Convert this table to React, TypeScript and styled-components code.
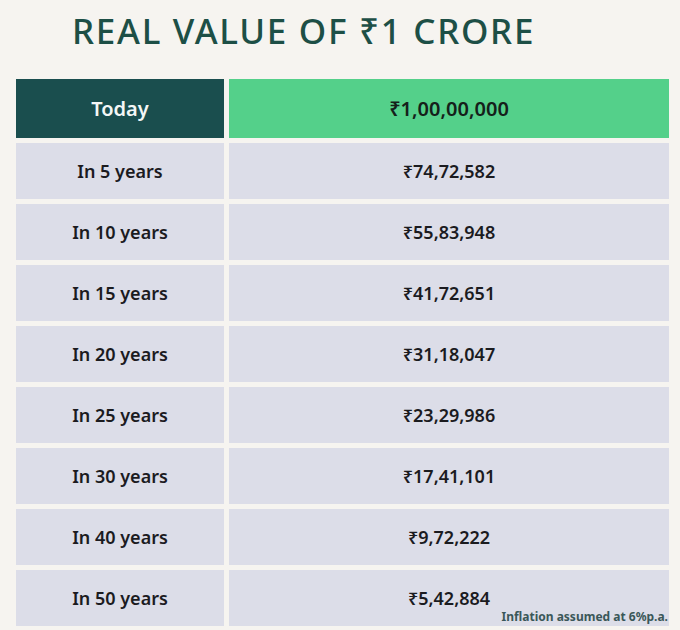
import React from 'react'
import styled, { createGlobalStyle } from 'styled-components'

const GlobalStyle = createGlobalStyle`
  html, body {
    margin: 0;
    padding: 0;
    background: #f6f4f0;
  }
  body {
    font-family: 'Noto Sans', 'DejaVu Sans', sans-serif;
  }
`

type Row = {
  label: string
  value: string
}

const rows: Row[] = [
  { label: 'In 5 years', value: '₹74,72,582' },
  { label: 'In 10 years', value: '₹55,83,948' },
  { label: 'In 15 years', value: '₹41,72,651' },
  { label: 'In 20 years', value: '₹31,18,047' },
  { label: 'In 25 years', value: '₹23,29,986' },
  { label: 'In 30 years', value: '₹17,41,101' },
  { label: 'In 40 years', value: '₹9,72,222' },
  { label: 'In 50 years', value: '₹5,42,884' },
]

export default function App() {
  return (
    <>
      <GlobalStyle />
      <Page>
        <Title>REAL VALUE OF ₹1 CRORE</Title>
        <Table>
          <HeadLabel>Today</HeadLabel>
          <HeadValue>₹1,00,00,000</HeadValue>
          {rows.map((row, i) => (
            <React.Fragment key={row.label}>
              <Cell>{row.label}</Cell>
              <Cell>
                {row.value}
                {i === rows.length - 1 && <Note>Inflation assumed at 6%p.a.</Note>}
              </Cell>
            </React.Fragment>
          ))}
        </Table>
      </Page>
    </>
  )
}

const Page = styled.div`
  width: 680px;
  height: 630px;
  padding: 5px 11px 0 16px;
  box-sizing: border-box;
  overflow: hidden;
`

const Title = styled.h1`
  margin: 0 0 23px 56px;
  height: 51px;
  line-height: 51px;
  color: #1d4f46;
  font-size: 35px;
  font-weight: 500;
  letter-spacing: 1.7px;
  white-space: nowrap;
`

const Table = styled.div`
  display: grid;
  grid-template-columns: 208px 440px;
  grid-template-rows: 59px repeat(8, 56px);
  column-gap: 5px;
  row-gap: 5px;
`

const Cell = styled.div`
  position: relative;
  display: flex;
  align-items: center;
  justify-content: center;
  background: #dcdde8;
  color: #1b1b1f;
  font-size: 18px;
  font-weight: 600;
`

const HeadLabel = styled(Cell)`
  background: #1a4e4e;
  color: #f4f7f6;
  font-size: 20px;
`

const HeadValue = styled(Cell)`
  background: #54d08a;
  color: #15201a;
  font-size: 20px;
`

const Note = styled.span`
  position: absolute;
  right: 1px;
  bottom: 1px;
  color: #3a5758;
  font-size: 12px;
  font-weight: 700;
`
